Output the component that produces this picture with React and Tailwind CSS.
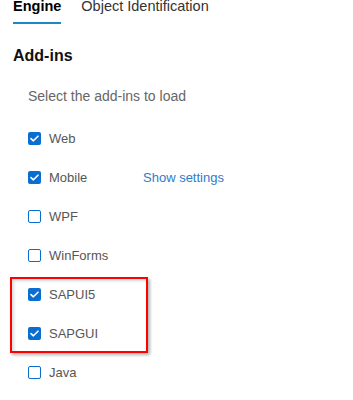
import React from "react";

function Box({ checked }) {
  if (checked) {
    return (
      <span className="flex h-[13px] w-[13px] shrink-0 items-center justify-center rounded-[2px] bg-[#0a6ed1]">
        <svg width="9" height="7" viewBox="0 0 9 7" fill="none">
          <path d="M1 3.6 L3.4 5.8 L8 1.2" stroke="white" strokeWidth="1.6" strokeLinecap="round" strokeLinejoin="round" />
        </svg>
      </span>
    );
  }
  return <span className="block h-[13px] w-[13px] shrink-0 rounded-[2px] border border-[#0a6ed1] bg-white" />;
}

function Row({ checked, label, extra }) {
  return (
    <div className="flex h-[39px] items-center gap-[8px]">
      <Box checked={checked} />
      <span className={"text-[13px] leading-[16px] text-[#565656]" + (extra ? " w-[86px]" : "")}>{label}</span>
      {extra ? <span className="text-[13px] leading-[16px] text-[#2f7cc9]">{extra}</span> : null}
    </div>
  );
}

export default function App() {
  return (
    <div className="h-[400px] w-[353px] overflow-hidden bg-white pl-[13px] font-['Liberation_Sans',Arial,sans-serif]">
      <div className="-mt-[2px] flex gap-[20px]">
        <div className="border-b-2 border-[#1c87c9] pb-[8px] text-[14.5px] font-bold leading-[16px] text-black">Engine</div>
        <div className="text-[14.5px] leading-[16px] text-[#333]">Object Identification</div>
      </div>
      <div className="mt-[22px] text-[16px] font-bold leading-[20px] text-[#111]">Add-ins</div>
      <div className="mt-[20px] pl-[15px] text-[14px] leading-[20px] text-[#666]">Select the add-ins to load</div>
      <div className="mt-[13px] pl-[15px]">
        <Row checked label="Web" />
        <Row checked label="Mobile" extra="Show settings" />
        <Row label="WPF" />
        <Row label="WinForms" />
        <div className="relative">
          <Row checked label="SAPUI5" />
          <Row checked label="SAPGUI" />
          <div className="pointer-events-none absolute left-[-18px] top-[2px] h-[76px] w-[138px] border-2 border-[#ff0000] shadow-[2px_2px_3px_rgba(0,0,0,0.3),inset_2px_2px_3px_rgba(0,0,0,0.15)]" />
        </div>
        <Row label="Java" />
      </div>
    </div>
  );
}
